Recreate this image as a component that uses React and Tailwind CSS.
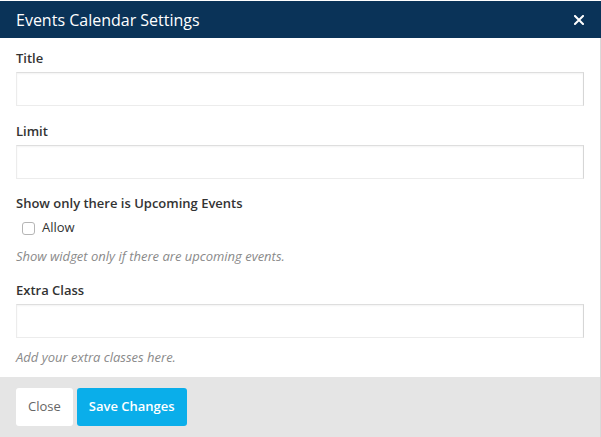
const Field = ({ label, help, mt = 'mt-[15px]' }) => (
  <div className={mt}>
    <label className="block h-5 leading-5 text-[13px] font-semibold text-[#333]">{label}</label>
    <input
      type="text"
      className="mt-1 block h-[34px] w-full border border-[#ececec] border-t-[#dedede] border-r-[#d6d6d6] bg-white shadow-[inset_0_1px_2px_rgba(0,0,0,0.05)] outline-none"
    />
    {help && <p className="mt-[9px] h-5 leading-5 text-[13px] italic text-[#8a8a8a]">{help}</p>}
  </div>
);

export default function App() {
  return (
    <div className="h-[437px] w-[601px] bg-white font-['Open_Sans',sans-serif] pt-px">
      <div className="flex h-[436px] flex-col border-r border-[#d9d9d9]">
        <div className="flex h-[37px] items-center justify-between bg-[#0a3358] pl-4 pr-[17px] -mr-px">
          <h1 className="text-[16px] text-white">Events Calendar Settings</h1>
          <svg className="h-[10px] w-[10px]" viewBox="0 0 10 10" fill="none">
            <path d="M1 1L9 9M9 1L1 9" stroke="white" strokeWidth="2" strokeLinecap="square" />
          </svg>
        </div>
        <div className="flex-1 px-4 pt-[10px]">
          <Field label="Title" mt="mt-0" />
          <Field label="Limit" />
          <div className="mt-[14px]">
            <div className="h-5 leading-5 text-[13px] font-semibold text-[#333]">Show only there is Upcoming Events</div>
            <label className="mt-[5px] flex h-5 items-center pl-[6px] text-[13px] text-[#333]">
              <span className="mr-[7px] inline-block h-[13px] w-[13px] rounded-[3px] border border-[#b5b5b5] bg-white"></span>
              Allow
            </label>
            <p className="mt-[8px] h-5 leading-5 text-[13px] italic text-[#8a8a8a]">Show widget only if there are upcoming events.</p>
          </div>
          <Field label="Extra Class" mt="mt-[14px]" help="Add your extra classes here." />
        </div>
        <div className="flex h-[60px] gap-1 bg-[#e5e5e5] px-4 pt-[11px]">
          <button className="h-[38px] rounded-[3px] bg-white px-3 text-[13px] text-[#666]">Close</button>
          <button className="h-[38px] rounded-[3px] bg-[#0aaeea] px-3 text-[13px] font-semibold text-white">Save Changes</button>
        </div>
      </div>
    </div>
  );
}
